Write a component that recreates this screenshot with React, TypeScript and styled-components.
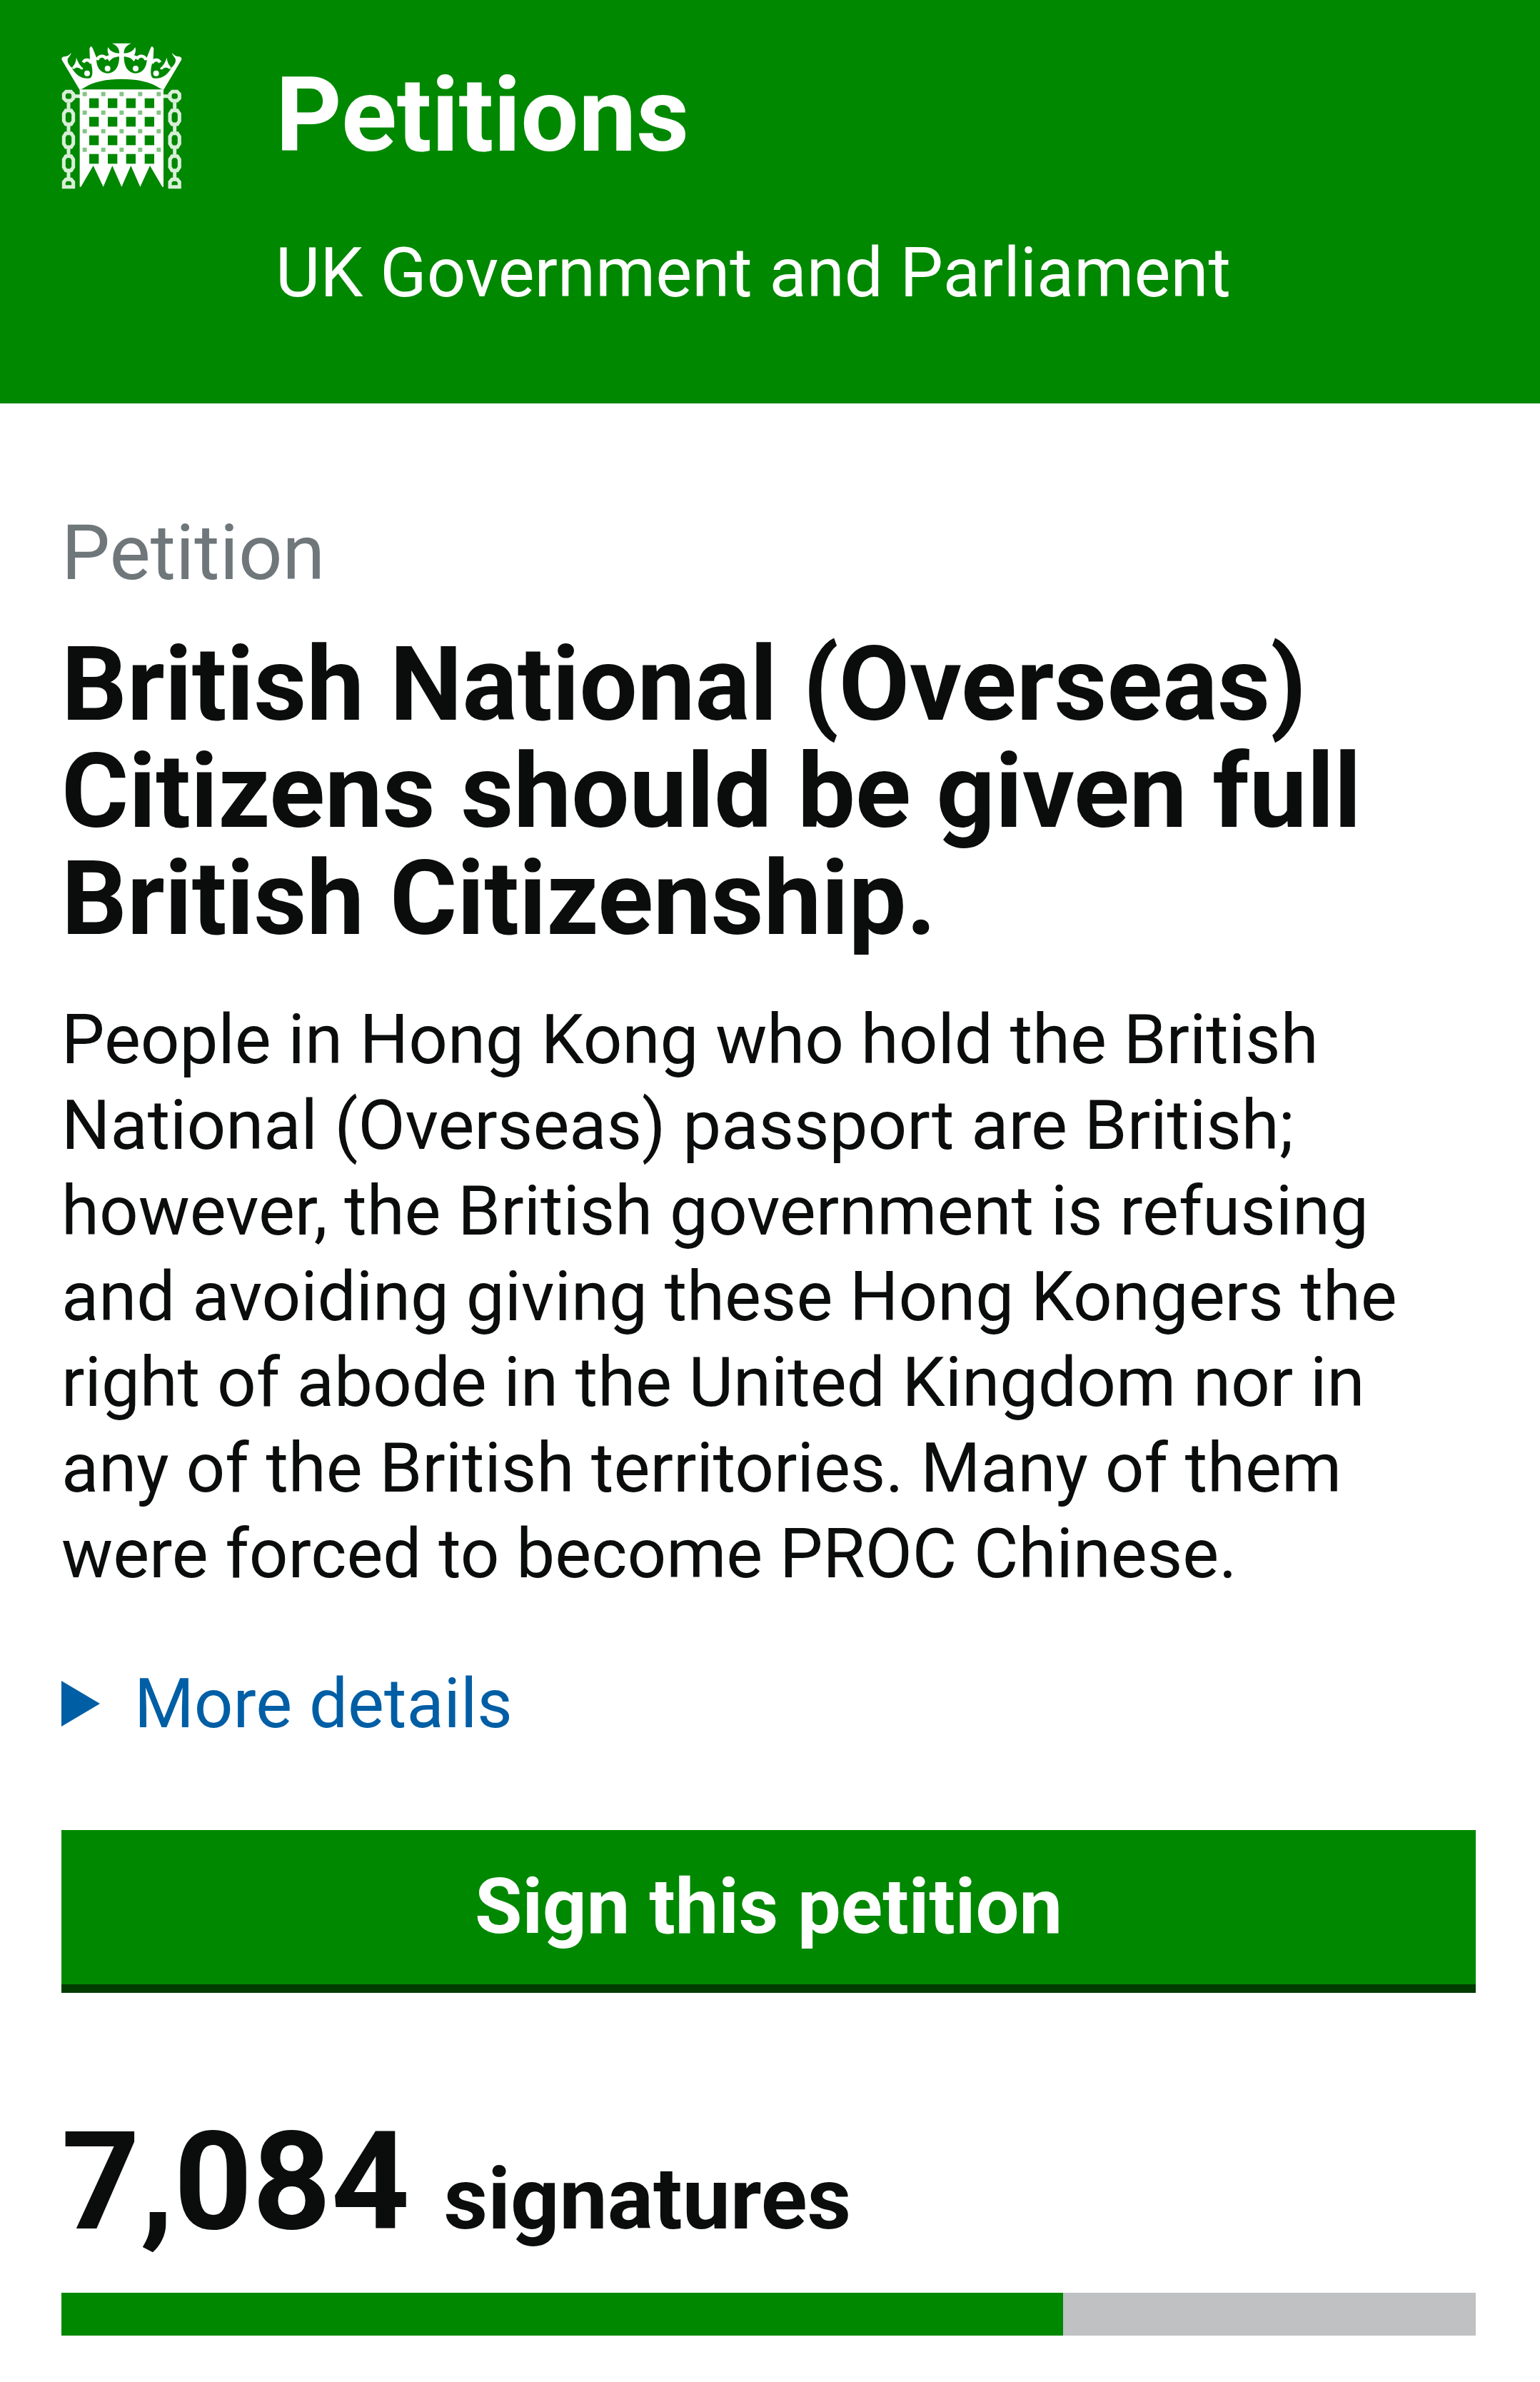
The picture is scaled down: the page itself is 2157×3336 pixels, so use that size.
import React from "react";
import styled, { createGlobalStyle } from "styled-components";

const GREEN = "#008800";

const Global = createGlobalStyle`
  * { box-sizing: border-box; }
  body { margin: 0; background: #fff; color: #0b0c0c; font-family: Roboto, "Liberation Sans", sans-serif; }
`;
const Header = styled.header`
  display: flex;
  gap: 130px;
  padding: 60px 86px 123px 80px;
  background: ${GREEN};
  color: #fff;
`;
const CrestSvg = styled.svg`
  display: block;
  flex: none;
  width: 176px;
  height: 208px;
`;
const Brand = styled.a`
  display: block;
  color: inherit;
  text-decoration: none;
  font-size: 144px;
  font-weight: 700;
  line-height: 204px;
`;
const Strap = styled.p`
  margin: 58px 0 0;
  font-size: 96px;
  line-height: 120px;
`;
const Main = styled.main`
  padding: 149px 90px 65px 86px;
`;
const Kicker = styled.p`
  margin: 0;
  color: #6f777b;
  font-size: 108px;
  line-height: 120px;
`;
const Title = styled.h1`
  margin: 50px 0 0;
  font-size: 144px;
  font-weight: 700;
  line-height: 150px;
`;
const Lead = styled.p`
  margin: 62px 0 0;
  font-size: 96px;
  line-height: 120px;
`;
const Details = styled.details`
  margin: 90px 0 0;
  font-size: 96px;
  line-height: 120px;
`;
const Summary = styled.summary`
  display: flex;
  align-items: center;
  gap: 48px;
  color: #005ea5;
  list-style: none;
  cursor: pointer;
`;
const Arrow = styled.svg`
  width: 54px;
  height: 64px;
`;
const Sign = styled.button`
  display: block;
  width: 100%;
  height: 228px;
  margin: 117px 0 0;
  padding: 0 0 2px;
  border: 0;
  border-bottom: 12px solid #003c00;
  background: ${GREEN};
  color: #fff;
  font: 700 108px/200px Roboto, "Liberation Sans", sans-serif;
  cursor: pointer;
`;
const Count = styled.h2`
  margin: 155px 0 0;
  font-size: 192px;
  font-weight: 700;
  line-height: 220px;
`;
const Unit = styled.span`
  font-size: 120px;
  line-height: 120px;
`;
const Progress = styled.progress`
  appearance: none;
  display: block;
  width: 100%;
  height: 60px;
  margin: 45px 0 0;
  border: 0;
  background: #bfc1c3;
  &::-webkit-progress-bar {
    background: #bfc1c3;
  }
  &::-webkit-progress-value {
    background: ${GREEN};
  }
`;

const COLS = [195, 273, 350, 428];
const ROWS = [293, 371, 449, 527];
const STUD_COLS = [176, 254, 331, 409, 487];
const STUD_ROWS = [275, 353, 431, 509];

// One half of the crown with its chain; the other half is its mirror image.
function CrestHalf() {
  return (
    <>
      <path
        fill="#fff"
        d="M155 258L80 132Q76 122 88 118C100 118 112 112 119 102C118 114 104 122 104 132C104 146 112 156 122 164C134 192 166 216 200 208C214 196 208 160 198 130L196 84Q203 66 210 84L226 124C222 156 240 188 272 188C304 186 322 160 321 116C324 88 316 72 290 62H332V212C270 212 210 222 168 252Z"
      />
      <path
        fill="#fff"
        d="M141 122C146 140 156 156 170 168C168 172 160 174 156 168C148 162 138 164 134 168C128 172 122 168 124 162C134 152 140 138 141 122Z"
      />
      <path fill="none" stroke="#fff" strokeWidth="13" d="M169 142C178 128 196 128 204 146" />
      <path fill="none" stroke="#fff" strokeWidth="13" d="M228 132C236 112 256 112 264 124L280 118" />
      <path fill="#fff" d="M274 78C284 96 300 104 324 104V118C304 118 290 124 280 138C270 130 274 122 278 112C272 100 270 90 274 78Z" />
      <circle cx="186" cy="188" r="12" fill="#fff" />
      <circle cx="272" cy="168" r="12" fill="#fff" />
      <g fill="none" stroke="#d9efd9" strokeWidth="15">
        <path d="M98 265H118L128 275V293L118 303H98L88 293V275Z" />
        <path d="M97 344H119L128 358V388L119 402H97L88 388V358Z" />
        <path d="M97 440H119L128 454V484L119 498H97L88 484V454Z" />
        <path d="M97 536H119L128 550V582L119 596H97L88 582V550Z" />
        <path d="M88 665V645L97 634H119L128 645V665Z" />
        <path d="M108 310V338M108 408V434M108 504V530M108 602V628M134 284H160" />
      </g>
    </>
  );
}

function Crest() {
  return (
    <CrestSvg viewBox="60 60 528 624" role="img" aria-label="UK Parliament">
      <CrestHalf />
      <g transform="translate(662 0) scale(-1 1)">
        <CrestHalf />
      </g>
      <path
        fill="#fff"
        d="M155 256H507V665H502L450 576L409 665L370 576L331 665L292 576L254 665L212 576L160 665H155Z"
      />
      {ROWS.map((y) => COLS.map((x) => <rect key={`${x}-${y}`} x={x} y={y} width="40" height="41" fill={GREEN} />))}
      {STUD_ROWS.map((y) =>
        STUD_COLS.map((x) => <rect key={`${x}-${y}`} x={x - 9} y={y - 9} width="18" height="18" rx="3" fill="#85c485" />)
      )}
    </CrestSvg>
  );
}

export default function App() {
  return (
    <>
      <Global />
      <Header>
        <Crest />
        <div>
          <Brand href="#">Petitions</Brand>
          <Strap>UK Government and Parliament</Strap>
        </div>
      </Header>
      <Main>
        <Kicker>Petition</Kicker>
        <Title>British National (Overseas) Citizens should be given full British Citizenship.</Title>
        <Lead>
          People in Hong Kong who hold the British National (Overseas) passport are British; however, the British
          government is refusing and avoiding giving these Hong Kongers the right of abode in the United Kingdom nor in
          any of the British territories. Many of them were forced to become PROC Chinese.
        </Lead>
        <Details>
          <Summary>
            <Arrow viewBox="0 0 54 64" aria-hidden="true">
              <path d="M0 0L54 32L0 64Z" fill="currentColor" />
            </Arrow>
            More details
          </Summary>
        </Details>
        <Sign type="button">Sign this petition</Sign>
        <Count id="count">
          7,084 <Unit>signatures</Unit>
        </Count>
        <Progress aria-labelledby="count" value={7084} max={10000} />
      </Main>
    </>
  );
}
